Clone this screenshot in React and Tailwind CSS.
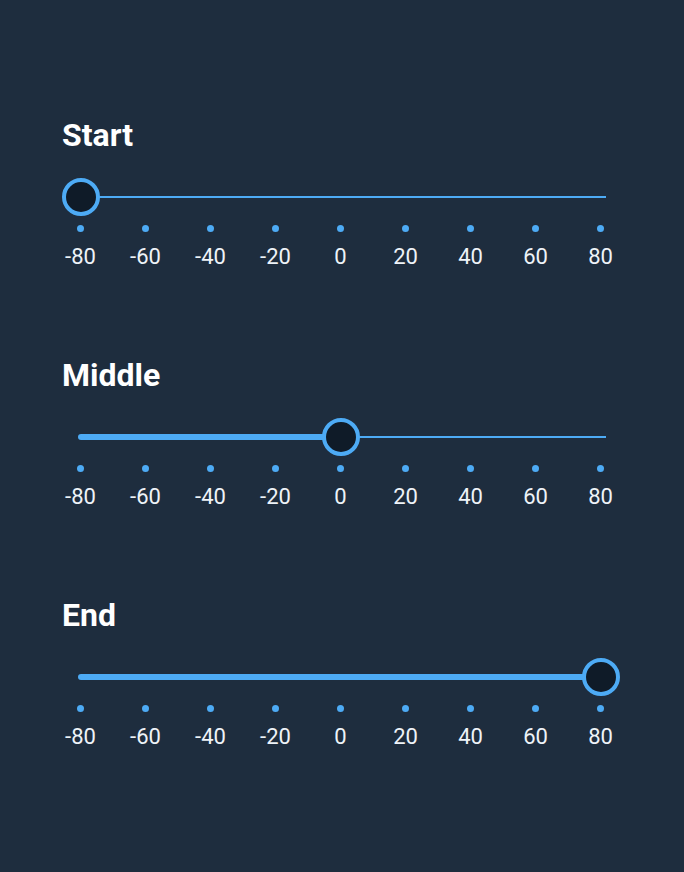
const ticks = [-80, -60, -40, -20, 0, 20, 40, 60, 80]

const sliders = [
  { label: 'Start', value: -80 },
  { label: 'Middle', value: 0 },
  { label: 'End', value: 80 },
]

function Slider({ label, value }) {
  const pct = (value + 80) / 160
  return (
    <section className="h-[240px]">
      <h2 className="pl-[62px] text-[32px] leading-[36px] font-bold text-white">{label}</h2>
      {/* rail: filled part, thumb, rest */}
      <div className="mt-[24px] ml-[78px] w-[528px] h-[40px] flex items-center">
        <div className="h-[6px] shrink-0 rounded-full bg-[#4dabf5]" style={{ width: `${pct * 520 + 3}px` }} />
        <div className="relative z-10 -mx-[19px] w-[38px] h-[38px] shrink-0 rounded-full border-[4px] border-[#4dabf5] bg-[#0f1b28]" />
        <div className="flex-1 h-[2px] bg-[#4dabf5]" />
      </div>
      <div className="mt-[8px] pl-[48px] flex">
        {ticks.map((t) => (
          <div key={t} className="w-[65px] flex flex-col items-center">
            <span className="w-[7px] h-[7px] rounded-full bg-[#4dabf5]" />
            <span className="mt-[12px] text-[22px] leading-[26px] text-[#eef3f8]">{t}</span>
          </div>
        ))}
      </div>
    </section>
  )
}

export default function App() {
  return (
    <div className="w-[684px] h-[872px] bg-[#1e2d3e] pt-[117px] overflow-hidden" style={{ fontFamily: 'Roboto, "Liberation Sans", sans-serif' }}>
      {sliders.map((s) => (
        <Slider key={s.label} {...s} />
      ))}
    </div>
  )
}
